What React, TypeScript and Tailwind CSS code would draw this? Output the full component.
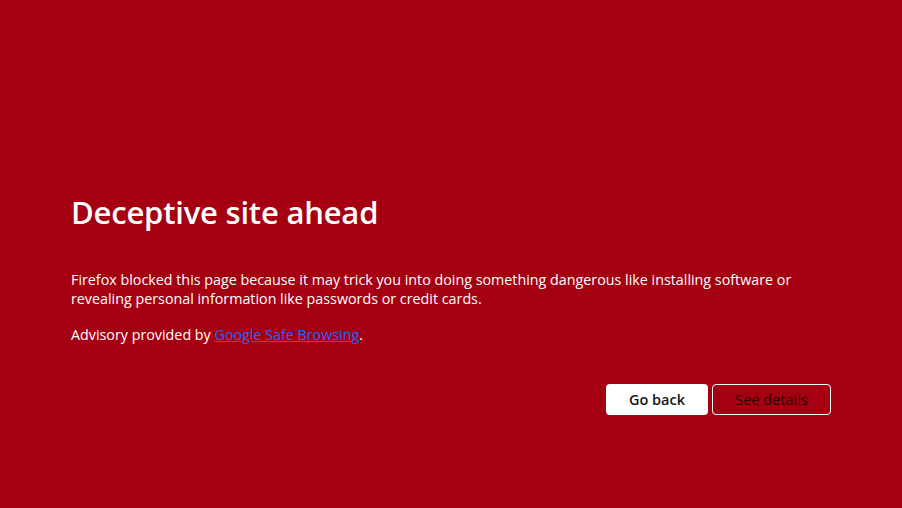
export default function App() {
  return (
    <div
      className="flex h-[508px] w-[902px] justify-center bg-[#a50011] text-white"
      style={{ fontFamily: '"Open Sans", "Noto Sans", sans-serif' }}
    >
      <div className="w-[760px] pt-[190px]">
        <h1 className="text-[31px] font-semibold leading-[44px] tracking-[-0.2px]">Deceptive site ahead</h1>
        <p className="mt-[36px] text-[14.3px] leading-[19px]">
          Firefox blocked this page because it may trick you into doing something dangerous like installing software or
          revealing personal information like passwords or credit cards.
        </p>
        <p className="mt-[17px] text-[14.3px] leading-[19px]">
          Advisory provided by{" "}
          <a href="#" className="text-[#2563ff] underline">
            Google Safe Browsing
          </a>
          .
        </p>
        <div className="mt-[40px] flex justify-end gap-[4px]">
          <button className="h-[31px] w-[102px] rounded-[4px] bg-white text-[14.5px] font-semibold text-[#15141a]">
            Go back
          </button>
          <button className="h-[31px] w-[119px] rounded-[4px] border border-white text-[14.5px] text-[#2b0004]">
            See details
          </button>
        </div>
      </div>
    </div>
  );
}
